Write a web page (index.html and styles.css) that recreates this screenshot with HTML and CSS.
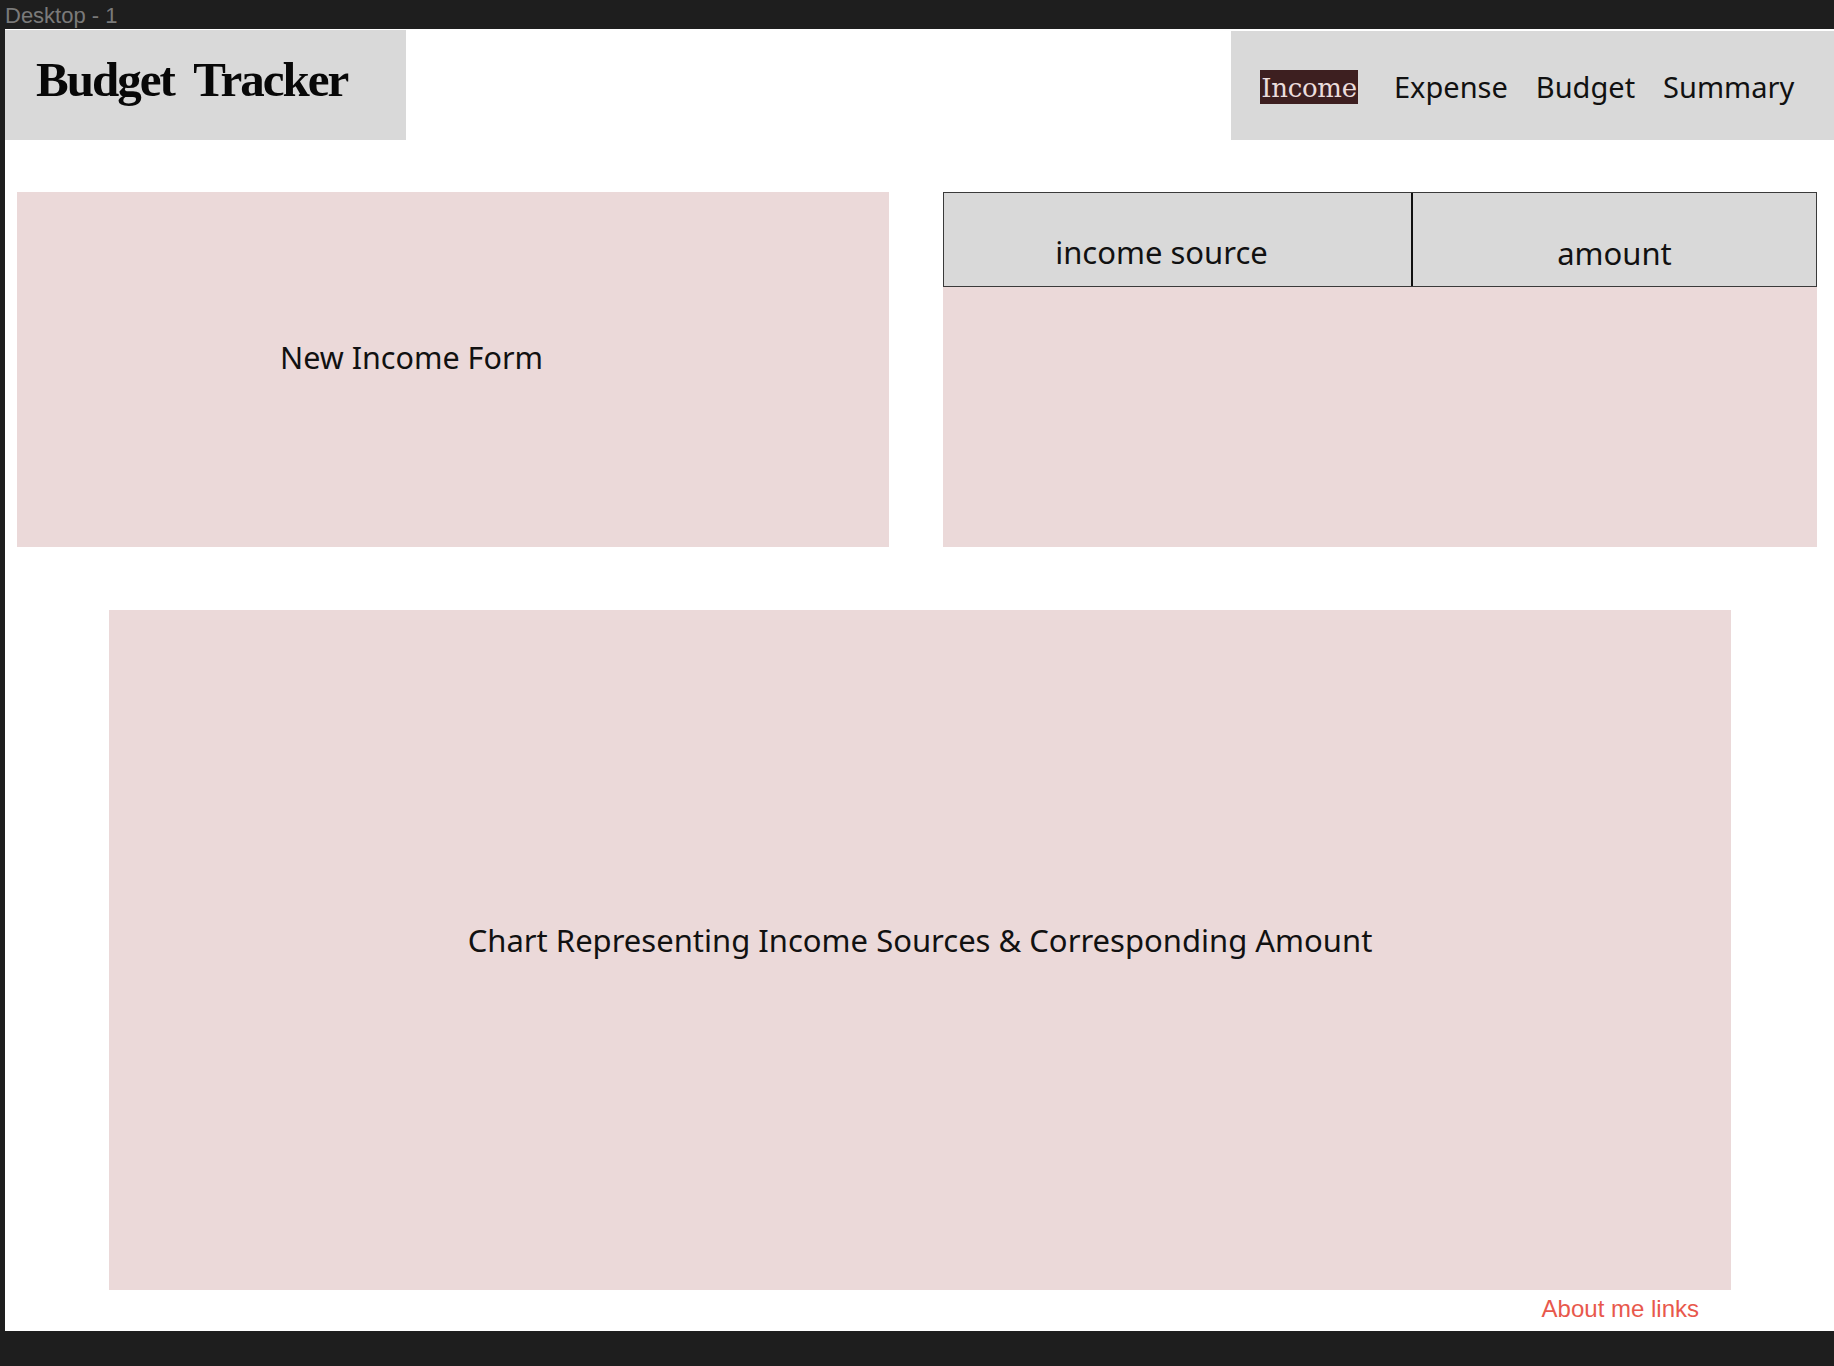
FILE: index.html
```html
<!DOCTYPE html>
<html lang="en">
<head>
<meta charset="utf-8">
<title>Budget Tracker</title>
<link rel="stylesheet" href="styles.css">
</head>
<body>
  <div class="titlebar">Desktop - 1</div>
  <div class="frame">
    <header class="topbar">
      <div class="logo">Budget&nbsp; Tracker</div>
      <nav class="nav">
        <a class="nav-item active">Income</a>
        <a class="nav-item">Expense</a>
        <a class="nav-item">Budget</a>
        <a class="nav-item">Summary</a>
      </nav>
    </header>
    <section class="cards">
      <div class="card form-card">New Income Form</div>
      <div class="card table-card">
        <div class="table-head">
          <div class="th th-source">income source</div>
          <div class="th th-amount">amount</div>
        </div>
        <div class="table-body"></div>
      </div>
    </section>
    <section class="chart">Chart Representing Income Sources &amp; Corresponding Amount</section>
    <footer class="footer"><a class="about">About me links</a></footer>
  </div>
</body>
</html>
```

FILE: styles.css
```css
* { box-sizing: border-box; }

html, body {
  margin: 0;
  padding: 0;
  background: #1e1e1e;
}

body {
  width: 1834px;
  height: 1366px;
  overflow: hidden;
  font-family: "Noto Sans", "Open Sans", sans-serif;
  color: #111;
}

.titlebar {
  height: 29px;
  padding: 1px 0 0 5px;
  font-family: "Liberation Sans", Arial, sans-serif;
  font-size: 22px;
  line-height: 29px;
  color: #7a7a7a;
}

.frame {
  margin-left: 5px;
  height: 1302px;
  background: #ffffff;
  display: flex;
  flex-direction: column;
}

.topbar {
  display: flex;
  justify-content: space-between;
  align-items: flex-start;
  padding-top: 1px;
}

.logo {
  width: 401px;
  height: 110px;
  background: #d9d9d9;
  padding: 20px 0 0 31px;
  font-family: "Liberation Serif", "Times New Roman", serif;
  font-weight: 700;
  font-size: 49px;
  line-height: 60px;
  letter-spacing: -2px;
  color: #080808;
  white-space: nowrap;
}

.nav {
  width: 603px;
  height: 109px;
  margin-top: 1px;
  background: #d9d9d9;
  display: flex;
  align-items: flex-start;
  gap: 28px;
  padding: 39px 0 0 29px;
}

.nav-item {
  font-size: 29px;
  line-height: 34px;
  color: #111;
  white-space: nowrap;
}

.nav-item.active {
  font-family: "DejaVu Serif", "Liberation Serif", serif;
  font-size: 26px;
  line-height: 28px;
  padding: 4px 0 2px;
  height: 34px;
  width: 98px;
  margin-right: 8px;
  background: #3d1f20;
  color: #eadcdc;
  text-align: center;
  letter-spacing: -0.3px;
}

.cards {
  display: flex;
  gap: 54px;
  margin-top: 52px;
  padding-left: 12px;
}

.card {
  height: 355px;
  background: #ebd9d9;
}

.form-card {
  width: 872px;
  padding: 145px 0 0 263px;
  font-size: 30.5px;
  line-height: 40px;
}

.table-card {
  width: 874px;
  display: flex;
  flex-direction: column;
}

.table-head {
  display: flex;
  height: 95px;
  background: #d9d9d9;
  border: 1px solid #3a3a3a;
}

.th {
  font-size: 31px;
  line-height: 40px;
  padding-top: 39px;
  text-align: center;
  white-space: nowrap;
}

.th-source {
  width: 469px;
  padding-right: 32px;
  border-right: 2px solid #111;
}

.th-amount {
  flex: 1;
  padding-top: 40px;
}

.table-body {
  flex: 1;
  background: #ebd9d9;
}

.chart {
  margin: 63px 0 0 104px;
  width: 1622px;
  height: 680px;
  background: #ebd9d9;
  padding-top: 310px;
  text-align: center;
  font-size: 31px;
  line-height: 40px;
}

.footer {
  display: flex;
  justify-content: flex-end;
  margin-top: 5px;
  padding-right: 135px;
}

.about {
  font-family: "Liberation Sans", Arial, sans-serif;
  font-size: 24px;
  line-height: 28px;
  color: #e8584c;
}
```
